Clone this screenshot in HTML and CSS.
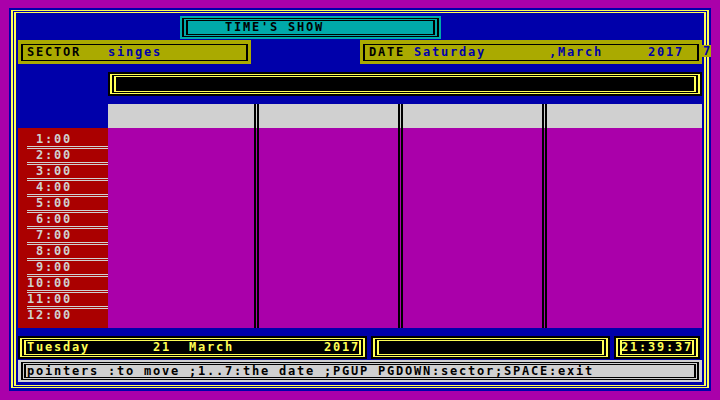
FILE: index.html
```html
<!DOCTYPE html>
<html lang="en">
<head>
<meta charset="utf-8">
<title>TIME'S SHOW</title>
<link rel="stylesheet" href="styles.css">
</head>
<body>
<div class="screen">
  <div class="ring1">
    <div class="ring2">
      <div class="row-title">
        <div class="title-box">
          <div class="tb-line1">
            <div class="tb-line2"><span class="title-txt">TIME'S SHOW</span></div>
          </div>
        </div>
      </div>

      <div class="row-info">
        <div class="info-box sector">
          <div class="info-line"><span class="key">SECTOR</span><span class="val">   singes</span></div>
        </div>
        <div class="info-box date">
          <div class="info-line"><span class="key">DATE</span><span class="val"> Saturday       ,March     2017</span></div>
          <span class="spill">7</span>
        </div>
      </div>

      <div class="row-main">
        <div class="hours">
          <div class="hour"> 1:00</div><div class="hsep"></div>
          <div class="hour"> 2:00</div><div class="hsep"></div>
          <div class="hour"> 3:00</div><div class="hsep"></div>
          <div class="hour"> 4:00</div><div class="hsep"></div>
          <div class="hour"> 5:00</div><div class="hsep"></div>
          <div class="hour"> 6:00</div><div class="hsep"></div>
          <div class="hour"> 7:00</div><div class="hsep"></div>
          <div class="hour"> 8:00</div><div class="hsep"></div>
          <div class="hour"> 9:00</div><div class="hsep"></div>
          <div class="hour">10:00</div><div class="hsep"></div>
          <div class="hour">11:00</div><div class="hsep"></div>
          <div class="hour">12:00</div>
        </div>
        <div class="main">
          <div class="ybar bar-top">
            <div class="y1"><div class="y2"></div></div>
          </div>
          <div class="grid">
            <div class="col c-wide"></div>
            <div class="vsep"></div>
            <div class="col c-mid"></div>
            <div class="vsep"></div>
            <div class="col c-mid"></div>
            <div class="vsep"></div>
            <div class="col c-last"></div>
          </div>
        </div>
      </div>

      <div class="row-bottom">
        <div class="ybar b-date">
          <div class="y1"><div class="y2"><span class="ytxt date-txt">Tuesday       21  March          2017</span></div></div>
        </div>
        <div class="ybar b-mid">
          <div class="y1"><div class="y2"></div></div>
        </div>
        <div class="ybar b-time">
          <div class="y1"><div class="y2"><span class="ytxt time-txt">21:39:37</span></div></div>
        </div>
      </div>

      <div class="status">
        <div class="s1">
          <div class="s2"><span class="status-txt">pointers :to move ;1..7:the date ;PGUP PGDOWN:sector;SPACE:exit</span></div>
        </div>
      </div>
    </div>
  </div>
</div>
</body>
</html>
```

FILE: styles.css
```css
* { box-sizing: border-box; }

html, body {
  margin: 0;
  padding: 0;
  width: 720px;
  height: 400px;
  overflow: hidden;
  background: #AA00AA;
}

body {
  font-family: "DejaVu Sans Mono", "Liberation Mono", monospace;
  font-weight: bold;
  font-size: 12px;
  letter-spacing: 1.775px;
  line-height: 13px;
}

/* outer blue frame with double yellow line */
.screen {
  margin: 8px 0 0 9px;
  width: 702px;
  height: 383px;
  background: #0000AA;
  padding: 2px 2px 3px 2px;
}
.ring1 {
  height: 100%;
  border: solid #FFFF55;
  border-width: 1px 2px;
  padding: 1px;
}
.ring2 {
  height: 100%;
  border: solid #FFFF55;
  border-width: 1px 2px;
  padding: 3px 2px;
  display: flex;
  flex-direction: column;
}

/* title */
.row-title {
  display: flex;
  height: 23px;
  padding-left: 162px;
}
.title-box {
  width: 261px;
  height: 23px;
  background: #00AAAA;
  padding: 2px;
}
.tb-line1 {
  height: 100%;
  border: solid #000;
  border-width: 1px 2px;
  padding: 1px 2px;
}
.tb-line2 {
  height: 100%;
  border: solid #000;
  border-width: 1px 2px;
  display: flex;
  align-items: center;
  padding-left: 37px;
  color: #000;
  white-space: pre;
}

/* sector / date */
.row-info {
  margin-top: 1px;
  height: 24px;
  display: flex;
  justify-content: space-between;
}
.info-box {
  position: relative;
  height: 24px;
  background: #AAAA00;
  padding: 4px 3px 3px 3px;
}
.sector { width: 233px; }
.date { width: 342px; }
.info-line {
  height: 100%;
  border: solid #000;
  border-width: 1px 2px;
  display: flex;
  align-items: center;
  padding-left: 4px;
  white-space: pre;
}
.key { color: #000; }
.val { color: #0000AA; }
.spill {
  position: absolute;
  left: 342px;
  top: 5px;
  width: 9px;
  height: 12px;
  background: #AAAA00;
  color: #0000AA;
  line-height: 12px;
  letter-spacing: 0;
  padding-left: 1px;
}

/* main area */
.row-main {
  margin-top: 8px;
  height: 256px;
  display: flex;
}
.hours {
  width: 90px;
  height: 200px;
  margin-top: 56px;
  background: #AA0000;
  padding-top: 5px;
  color: #D0D0D0;
}
.hour {
  height: 13px;
  line-height: 13px;
  padding-left: 9px;
  white-space: pre;
}
.hsep {
  margin-left: 9px;
  height: 3px;
  border-top: 1px solid #D0D0D0;
  border-bottom: 1px solid #D0D0D0;
}
.main {
  width: 594px;
  display: flex;
  flex-direction: column;
  gap: 8px;
}

/* black boxes with double yellow line */
.ybar {
  background: #000;
  padding: 2px;
  color: #FFFF55;
}
.y1 {
  height: 100%;
  border: solid #FFFF55;
  border-width: 1px 2px;
  padding: 1px 2px;
}
.y2 {
  height: 100%;
  border: solid #FFFF55;
  border-width: 1px 2px;
  display: flex;
  align-items: center;
  white-space: pre;
}
.bar-top { height: 24px; }
.date-txt { padding-left: 1px; }
.time-txt { margin-left: -1px; }

.grid {
  height: 224px;
  display: flex;
  background: linear-gradient(#D0D0D0 0 24px, #AA00AA 24px);
}
.col { flex: none; }
.c-wide { width: 146px; }
.c-mid { width: 139px; }
.c-last { width: 155px; }
.vsep {
  flex: none;
  width: 5px;
  border-left: 2px solid #000;
  border-right: 2px solid #000;
}

/* bottom row */
.row-bottom {
  margin-top: 8px;
  height: 23px;
  display: flex;
  gap: 4px;
}
.row-bottom .ybar { height: 23px; }
.b-date { width: 349px; }
.b-mid { width: 239px; }
.b-time { width: 86px; }

/* status line */
.status {
  margin-top: 1px;
  height: 22px;
  background: #D0D0D0;
  padding: 2px 3px;
}
.s1 {
  height: 100%;
  border: solid #000;
  border-width: 1px 2px;
  padding: 1px;
}
.s2 {
  height: 100%;
  border: solid #000;
  border-width: 1px 2px;
  display: flex;
  align-items: center;
  padding-left: 1px;
  color: #000;
  white-space: pre;
}
```
